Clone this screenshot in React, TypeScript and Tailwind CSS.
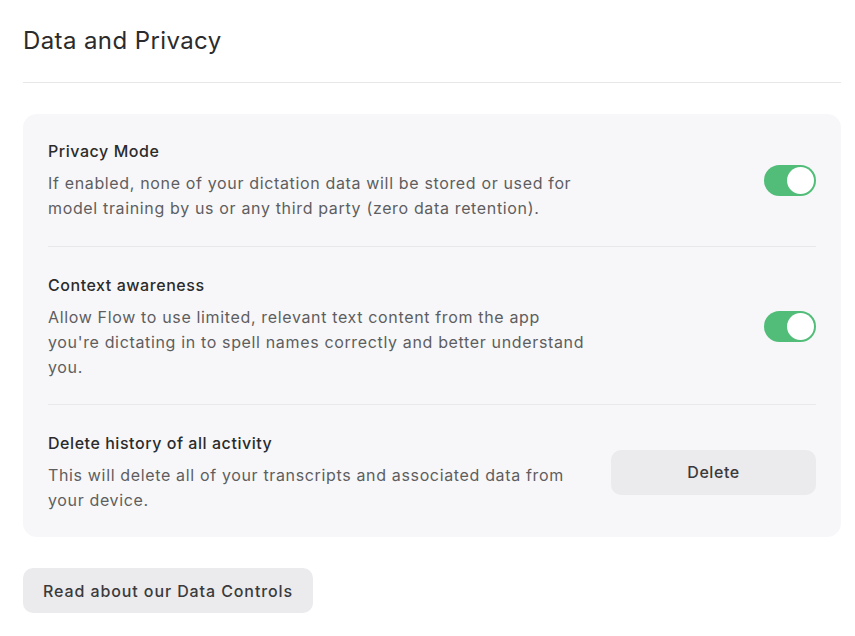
import { useState } from "react"

function Toggle({ on, onChange }: { on: boolean; onChange: () => void }) {
  return (
    <button
      type="button"
      onClick={onChange}
      className={`relative h-[31px] w-[52px] shrink-0 rounded-full transition-colors ${
        on ? "bg-[#52bd78]" : "bg-[#d9d9dd]"
      }`}
    >
      <span
        className={`absolute top-[2px] h-[27px] w-[27px] rounded-full bg-white transition-all ${
          on ? "left-[23px]" : "left-[2px]"
        }`}
      />
    </button>
  )
}

export default function App() {
  const [privacy, setPrivacy] = useState(true)
  const [context, setContext] = useState(true)

  return (
    <div
      className="min-h-screen bg-white px-[23px] pt-[25px] text-[#2b2b2b]"
      style={{ fontFamily: "Inter, 'Noto Sans', sans-serif" }}
    >
      <div className="w-[818px]">
        <h1 className="border-b border-[#e8e8ea] pb-[25px] text-[24px] leading-8 font-normal tracking-[0.4px]">
          Data and Privacy
        </h1>

        <div className="mt-[31px] rounded-[14px] bg-[#f7f7f9] px-[25px]">
          {/* Privacy mode */}
          <div className="flex items-center justify-between border-b border-[#e9e9ec] pt-[25px] pb-[25px]">
            <div className="max-w-[540px]">
              <div className="text-[16px] leading-6 font-medium tracking-[0.55px]">Privacy Mode</div>
              <p className="mt-2 text-[16px] leading-[25px] tracking-[0.65px] text-[#5e5e60]">
                If enabled, none of your dictation data will be stored or used for model training by us or any third
                party (zero data retention).
              </p>
            </div>
            <Toggle on={privacy} onChange={() => setPrivacy(!privacy)} />
          </div>

          {/* Context awareness */}
          <div className="flex items-center justify-between border-b border-[#e9e9ec] pt-[26px] pb-[24px]">
            <div className="max-w-[540px]">
              <div className="text-[16px] leading-6 font-medium tracking-[0.55px]">Context awareness</div>
              <p className="mt-2 text-[16px] leading-[25px] tracking-[0.65px] text-[#5e5e60]">
                Allow Flow to use limited, relevant text content from the app you're dictating in to spell names
                correctly and better understand you.
              </p>
            </div>
            <Toggle on={context} onChange={() => setContext(!context)} />
          </div>

          {/* Delete history */}
          <div className="flex items-center justify-between pt-[26px] pb-[24px]">
            <div className="max-w-[540px]">
              <div className="text-[16px] leading-6 font-medium tracking-[0.55px]">
                Delete history of all activity
              </div>
              <p className="mt-2 text-[16px] leading-[25px] tracking-[0.65px] text-[#5e5e60]">
                This will delete all of your transcripts and associated data from your device.
              </p>
            </div>
            <button
              type="button"
              className="h-[45px] w-[205px] shrink-0 rounded-[10px] bg-[#ebeaed] text-[16px] font-medium tracking-[0.55px] text-[#3a3a3c]"
            >
              Delete
            </button>
          </div>
        </div>

        <button
          type="button"
          className="mt-[31px] h-[45px] rounded-[10px] bg-[#ebeaed] px-5 text-[16px] font-medium tracking-[0.9px] text-[#3a3a3c]"
        >
          Read about our Data Controls
        </button>
      </div>
    </div>
  )
}
